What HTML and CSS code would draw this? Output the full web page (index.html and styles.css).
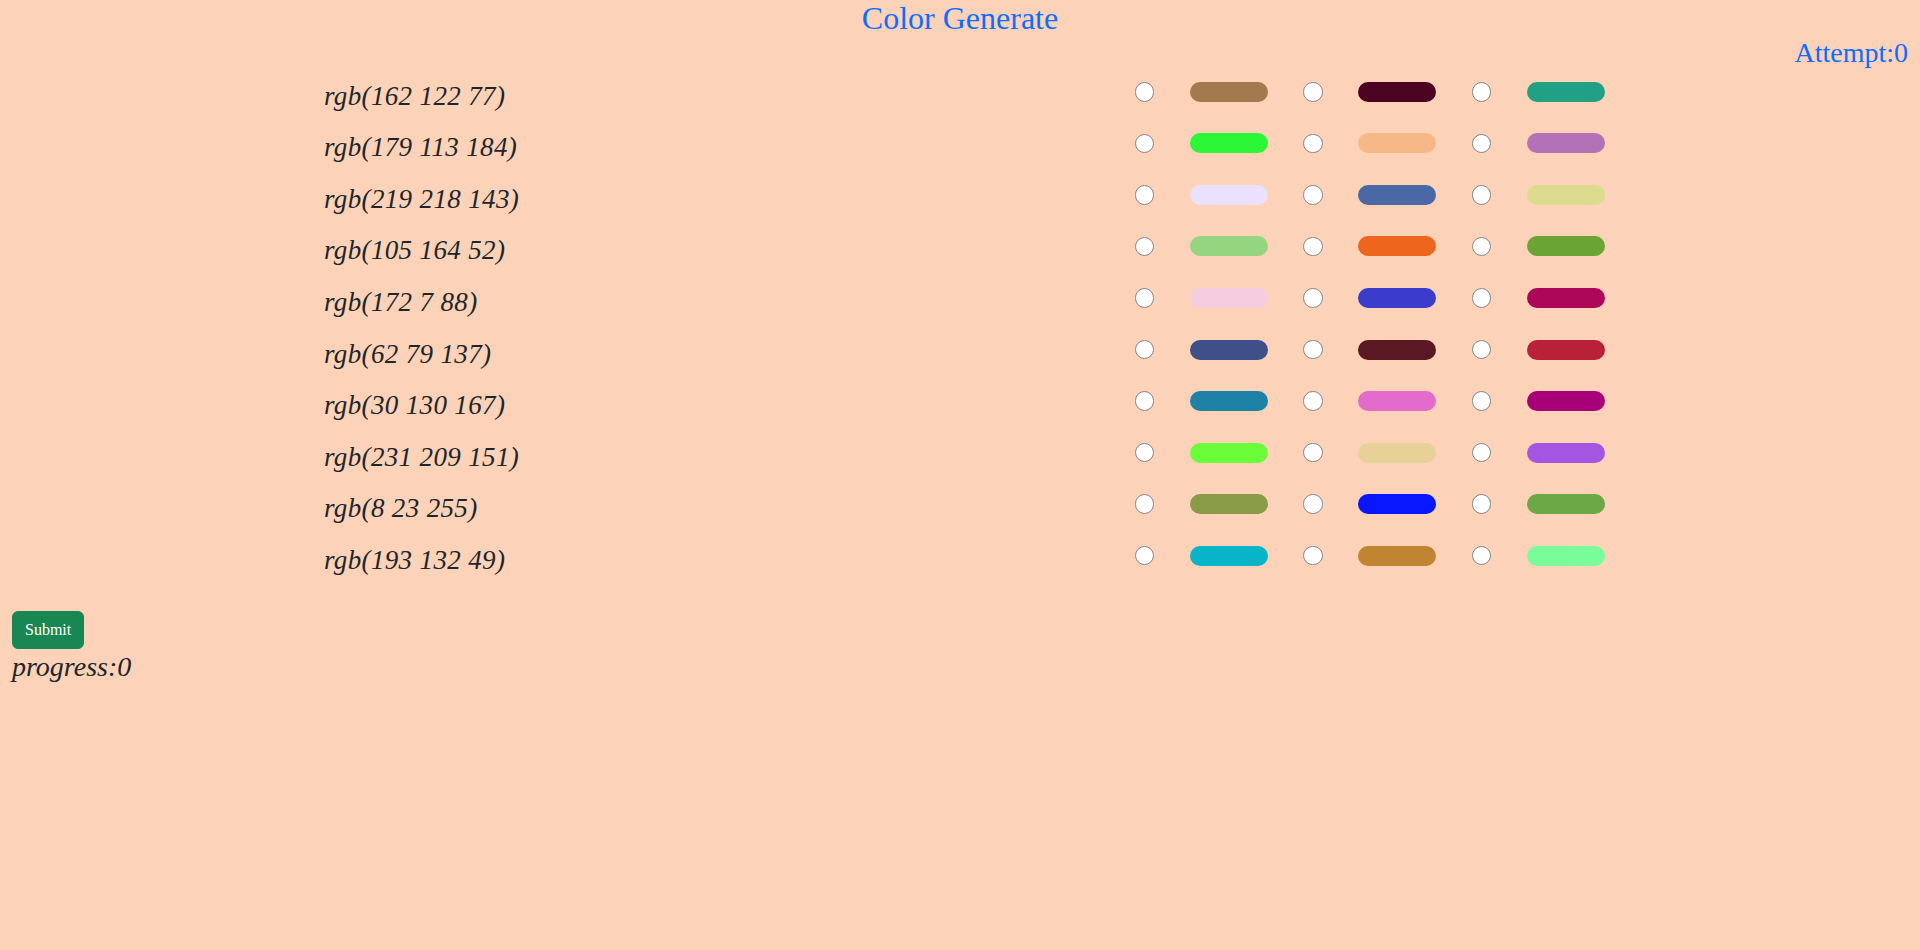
FILE: index.html
```html
<!DOCTYPE html>
<html lang="en">
<head>
<meta charset="utf-8">
<title>Color Generate</title>
<link rel="stylesheet" href="styles.css">
</head>
<body>
<h2 class="title">Color Generate</h2>
<h3 class="attempt">Attempt:0</h3>
<div class="board">
  <div class="row"><div class="label">rgb(162 122 77)</div><div class="options">
    <input class="radio" type="radio" name="q1"><span class="swatch" style="background:#a27a4d"></span>
    <input class="radio" type="radio" name="q1"><span class="swatch" style="background:#4d0422"></span>
    <input class="radio" type="radio" name="q1"><span class="swatch" style="background:#22a085"></span>
  </div></div>
  <div class="row"><div class="label">rgb(179 113 184)</div><div class="options">
    <input class="radio" type="radio" name="q2"><span class="swatch" style="background:#2bf737"></span>
    <input class="radio" type="radio" name="q2"><span class="swatch" style="background:#f7b887"></span>
    <input class="radio" type="radio" name="q2"><span class="swatch" style="background:#b371b8"></span>
  </div></div>
  <div class="row"><div class="label">rgb(219 218 143)</div><div class="options">
    <input class="radio" type="radio" name="q3"><span class="swatch" style="background:#ebe0fe"></span>
    <input class="radio" type="radio" name="q3"><span class="swatch" style="background:#4a67a6"></span>
    <input class="radio" type="radio" name="q3"><span class="swatch" style="background:#dbda8f"></span>
  </div></div>
  <div class="row"><div class="label">rgb(105 164 52)</div><div class="options">
    <input class="radio" type="radio" name="q4"><span class="swatch" style="background:#95d580"></span>
    <input class="radio" type="radio" name="q4"><span class="swatch" style="background:#ee661e"></span>
    <input class="radio" type="radio" name="q4"><span class="swatch" style="background:#69a434"></span>
  </div></div>
  <div class="row"><div class="label">rgb(172 7 88)</div><div class="options">
    <input class="radio" type="radio" name="q5"><span class="swatch" style="background:#f5cce0"></span>
    <input class="radio" type="radio" name="q5"><span class="swatch" style="background:#3b3ccb"></span>
    <input class="radio" type="radio" name="q5"><span class="swatch" style="background:#ac0758"></span>
  </div></div>
  <div class="row"><div class="label">rgb(62 79 137)</div><div class="options">
    <input class="radio" type="radio" name="q6"><span class="swatch" style="background:#3e4f89"></span>
    <input class="radio" type="radio" name="q6"><span class="swatch" style="background:#5a1922"></span>
    <input class="radio" type="radio" name="q6"><span class="swatch" style="background:#b92138"></span>
  </div></div>
  <div class="row"><div class="label">rgb(30 130 167)</div><div class="options">
    <input class="radio" type="radio" name="q7"><span class="swatch" style="background:#1e82a7"></span>
    <input class="radio" type="radio" name="q7"><span class="swatch" style="background:#e36bcb"></span>
    <input class="radio" type="radio" name="q7"><span class="swatch" style="background:#a80078"></span>
  </div></div>
  <div class="row"><div class="label">rgb(231 209 151)</div><div class="options">
    <input class="radio" type="radio" name="q8"><span class="swatch" style="background:#6cfd3a"></span>
    <input class="radio" type="radio" name="q8"><span class="swatch" style="background:#e7d197"></span>
    <input class="radio" type="radio" name="q8"><span class="swatch" style="background:#a456e3"></span>
  </div></div>
  <div class="row"><div class="label">rgb(8 23 255)</div><div class="options">
    <input class="radio" type="radio" name="q9"><span class="swatch" style="background:#899b47"></span>
    <input class="radio" type="radio" name="q9"><span class="swatch" style="background:#0817ff"></span>
    <input class="radio" type="radio" name="q9"><span class="swatch" style="background:#6ca846"></span>
  </div></div>
  <div class="row"><div class="label">rgb(193 132 49)</div><div class="options">
    <input class="radio" type="radio" name="q10"><span class="swatch" style="background:#08b4c7"></span>
    <input class="radio" type="radio" name="q10"><span class="swatch" style="background:#c18431"></span>
    <input class="radio" type="radio" name="q10"><span class="swatch" style="background:#78fd9a"></span>
  </div></div>
</div>
<div class="footer">
  <button class="btn" type="button">Submit</button>
  <div class="progress">progress:0</div>
</div>
</body>
</html>
```
FILE: styles.css
```css
html, body {
  margin: 0;
  padding: 0;
}
body {
  background: #fcd3b9;
  font-family: "Liberation Serif", "Times New Roman", serif;
  color: #212529;
}
.title {
  margin: 0;
  font-size: 32px;
  line-height: 36px;
  font-weight: normal;
  text-align: center;
  color: #0d6efd;
}
.attempt {
  margin: 4px 0 0;
  padding-right: 12px;
  font-size: 28px;
  line-height: 26px;
  font-weight: normal;
  text-align: right;
  color: #0d6efd;
}
.board {
  display: flex;
  flex-direction: column;
  padding-left: 324px;
}
.row {
  display: flex;
  align-items: center;
  height: 51.56px;
}
.label {
  width: 810.7px;
  flex: none;
  font-size: 27px;
  font-style: italic;
  letter-spacing: 0.35px;
  padding-top: 9px;
}
.options {
  display: flex;
  align-items: center;
  gap: 35.5px;
}
.radio {
  appearance: none;
  -webkit-appearance: none;
  flex: none;
  width: 19.5px;
  height: 19.5px;
  margin: 0;
  border: 1px solid #858585;
  border-radius: 50%;
  background: #fff;
}
.swatch {
  display: block;
  flex: none;
  width: 78px;
  height: 20px;
  border-radius: 10px;
}
.footer {
  margin-top: 29.5px;
  padding: 0 12px;
}
.btn {
  display: block;
  margin: 0;
  padding: 6px 12px;
  border: 1px solid #198754;
  border-radius: 6px;
  background: #198754;
  color: #fff;
  font-family: "Liberation Serif", "Times New Roman", serif;
  font-size: 16px;
  line-height: 24px;
}
.progress {
  margin-top: 2px;
  font-size: 28px;
  font-style: italic;
}
```
